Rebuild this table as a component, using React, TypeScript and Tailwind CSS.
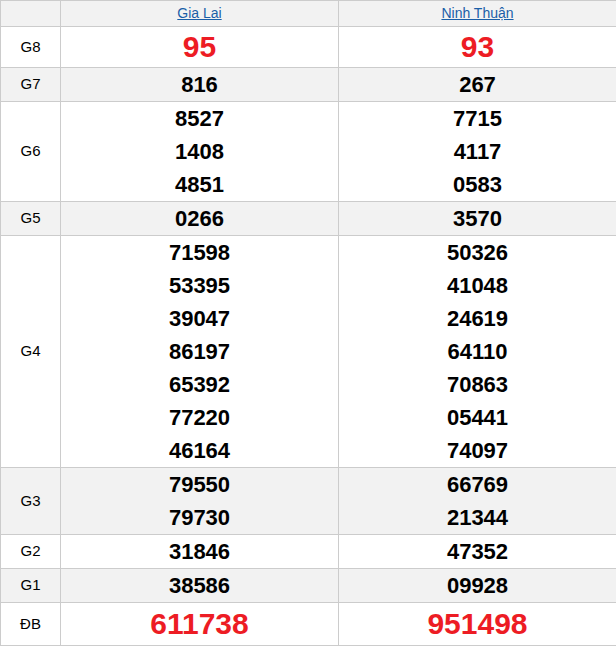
import React from "react";

interface IRow {
  label: string;
  left: string[];
  right: string[];
  gray?: boolean;
  big?: "g8" | "db";
}

const rows: IRow[] = [
  { label: "G8", left: ["95"], right: ["93"], big: "g8" },
  { label: "G7", left: ["816"], right: ["267"], gray: true },
  { label: "G6", left: ["8527", "1408", "4851"], right: ["7715", "4117", "0583"] },
  { label: "G5", left: ["0266"], right: ["3570"], gray: true },
  {
    label: "G4",
    left: ["71598", "53395", "39047", "86197", "65392", "77220", "46164"],
    right: ["50326", "41048", "24619", "64110", "70863", "05441", "74097"],
  },
  { label: "G3", left: ["79550", "79730"], right: ["66769", "21344"], gray: true },
  { label: "G2", left: ["31846"], right: ["47352"] },
  { label: "G1", left: ["38586"], right: ["09928"], gray: true },
  { label: "ĐB", left: ["611738"], right: ["951498"], big: "db" },
];

function Cell({ nums, big }: { nums: string[]; big?: "g8" | "db" }) {
  return (
    <td className="border border-[#cccccc] text-center align-middle p-0">
      {nums.map((n, i) =>
        big ? (
          <div
            key={i}
            className={
              big === "db"
                ? "text-[30px] leading-[42px] font-bold text-[#ed1c24]"
                : "text-[30px] leading-[40px] font-bold text-[#ed1c24]"
            }
          >
            {n}
          </div>
        ) : (
          <div key={i} className="text-[22px] leading-[33px] font-bold text-black">
            {n}
          </div>
        )
      )}
    </td>
  );
}

export default function App() {
  return (
    <div className="w-[616px] h-[647px] bg-white" style={{ fontFamily: '"Liberation Sans", Arial, sans-serif' }}>
      <table className="w-[616px] border-collapse table-fixed">
        <colgroup>
          <col className="w-[60px]" />
          <col className="w-[278px]" />
          <col className="w-[278px]" />
        </colgroup>
        <thead>
          <tr className="bg-[#f2f2f2] h-[26px]">
            <th className="border border-[#cccccc]"></th>
            <th className="border border-[#cccccc] font-normal text-[14px]">
              <a href="#" className="text-[#1a5ea8] underline">Gia Lai</a>
            </th>
            <th className="border border-[#cccccc] font-normal text-[14px]">
              <a href="#" className="text-[#1a5ea8] underline">Ninh Thuận</a>
            </th>
          </tr>
        </thead>
        <tbody>
          {rows.map((r) => (
            <tr key={r.label} className={r.gray ? "bg-[#f2f2f2]" : "bg-white"}>
              <td className="border border-[#cccccc] text-center text-[15px] text-black p-0">
                {r.label}
              </td>
              <Cell nums={r.left} big={r.big} />
              <Cell nums={r.right} big={r.big} />
            </tr>
          ))}
        </tbody>
      </table>
    </div>
  );
}
